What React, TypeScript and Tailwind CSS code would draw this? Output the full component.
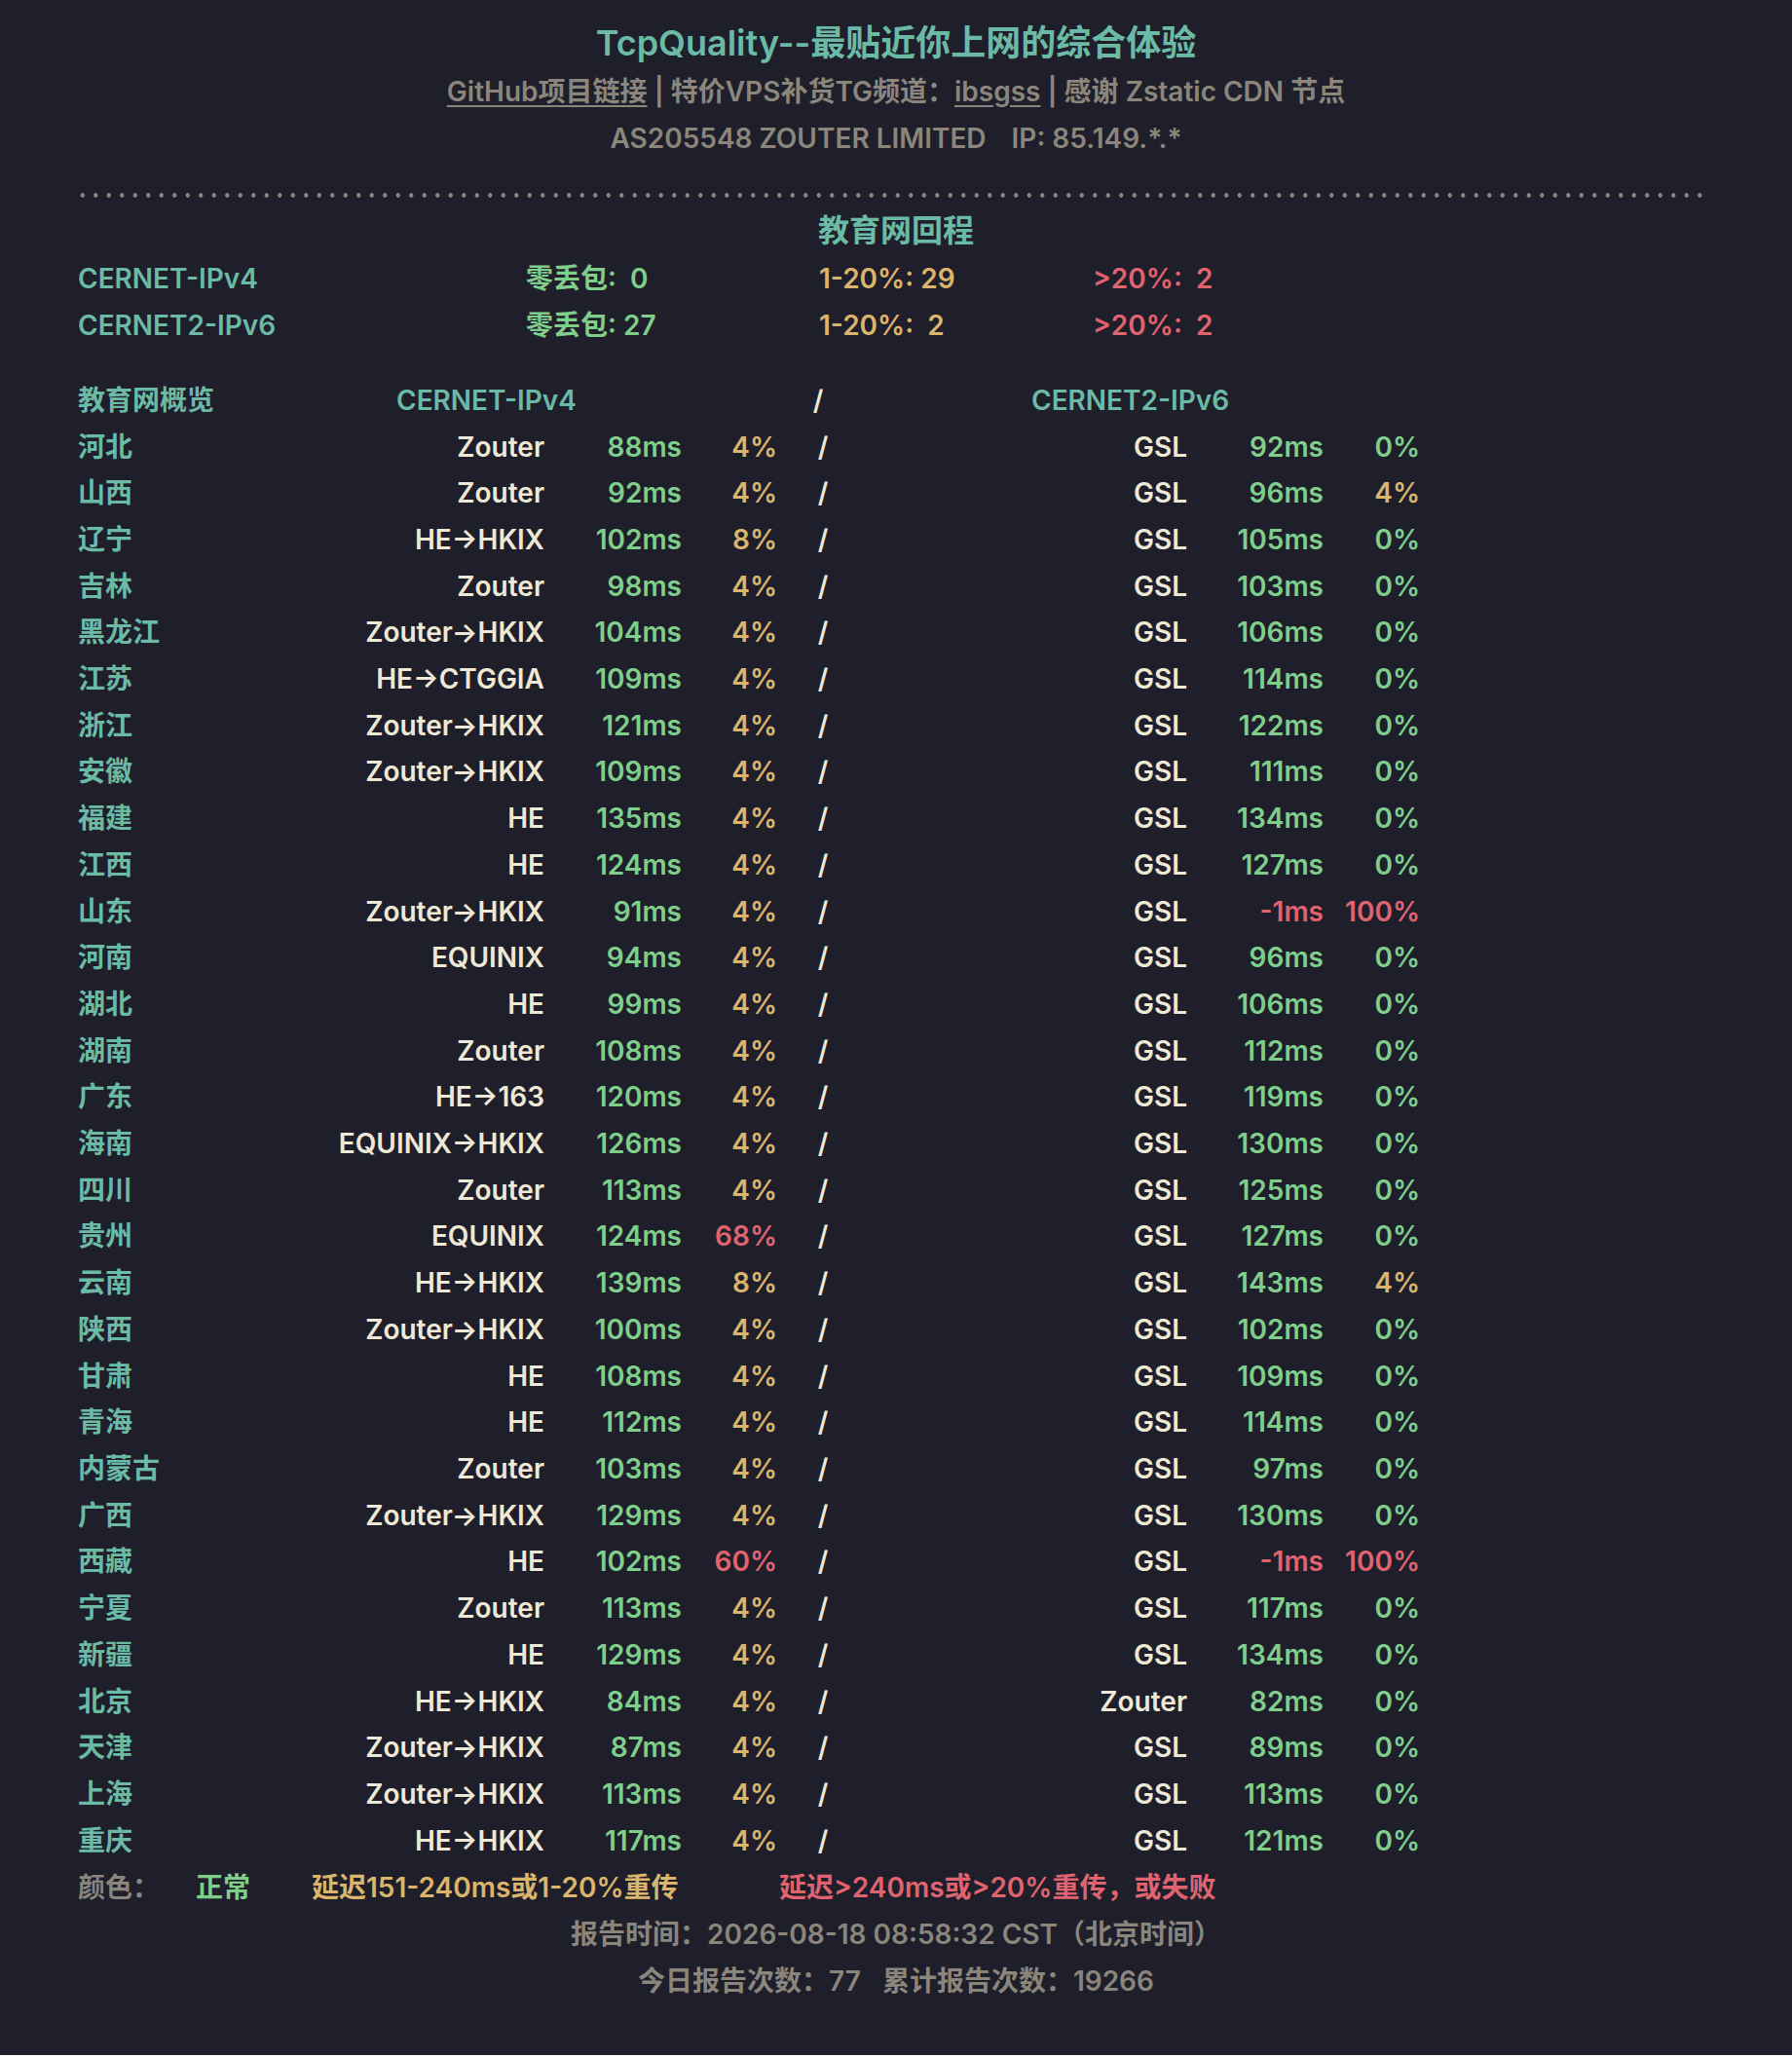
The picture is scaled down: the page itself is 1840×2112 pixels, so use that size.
type Row = {
  prov: string;
  v4: [string, number, number];
  v6: [string, number, number];
};

const rows: Row[] = [
  { prov: "河北", v4: ["Zouter", 88, 4], v6: ["GSL", 92, 0] },
  { prov: "山西", v4: ["Zouter", 92, 4], v6: ["GSL", 96, 4] },
  { prov: "辽宁", v4: ["HE→HKIX", 102, 8], v6: ["GSL", 105, 0] },
  { prov: "吉林", v4: ["Zouter", 98, 4], v6: ["GSL", 103, 0] },
  { prov: "黑龙江", v4: ["Zouter→HKIX", 104, 4], v6: ["GSL", 106, 0] },
  { prov: "江苏", v4: ["HE→CTGGIA", 109, 4], v6: ["GSL", 114, 0] },
  { prov: "浙江", v4: ["Zouter→HKIX", 121, 4], v6: ["GSL", 122, 0] },
  { prov: "安徽", v4: ["Zouter→HKIX", 109, 4], v6: ["GSL", 111, 0] },
  { prov: "福建", v4: ["HE", 135, 4], v6: ["GSL", 134, 0] },
  { prov: "江西", v4: ["HE", 124, 4], v6: ["GSL", 127, 0] },
  { prov: "山东", v4: ["Zouter→HKIX", 91, 4], v6: ["GSL", -1, 100] },
  { prov: "河南", v4: ["EQUINIX", 94, 4], v6: ["GSL", 96, 0] },
  { prov: "湖北", v4: ["HE", 99, 4], v6: ["GSL", 106, 0] },
  { prov: "湖南", v4: ["Zouter", 108, 4], v6: ["GSL", 112, 0] },
  { prov: "广东", v4: ["HE→163", 120, 4], v6: ["GSL", 119, 0] },
  { prov: "海南", v4: ["EQUINIX→HKIX", 126, 4], v6: ["GSL", 130, 0] },
  { prov: "四川", v4: ["Zouter", 113, 4], v6: ["GSL", 125, 0] },
  { prov: "贵州", v4: ["EQUINIX", 124, 68], v6: ["GSL", 127, 0] },
  { prov: "云南", v4: ["HE→HKIX", 139, 8], v6: ["GSL", 143, 4] },
  { prov: "陕西", v4: ["Zouter→HKIX", 100, 4], v6: ["GSL", 102, 0] },
  { prov: "甘肃", v4: ["HE", 108, 4], v6: ["GSL", 109, 0] },
  { prov: "青海", v4: ["HE", 112, 4], v6: ["GSL", 114, 0] },
  { prov: "内蒙古", v4: ["Zouter", 103, 4], v6: ["GSL", 97, 0] },
  { prov: "广西", v4: ["Zouter→HKIX", 129, 4], v6: ["GSL", 130, 0] },
  { prov: "西藏", v4: ["HE", 102, 60], v6: ["GSL", -1, 100] },
  { prov: "宁夏", v4: ["Zouter", 113, 4], v6: ["GSL", 117, 0] },
  { prov: "新疆", v4: ["HE", 129, 4], v6: ["GSL", 134, 0] },
  { prov: "北京", v4: ["HE→HKIX", 84, 4], v6: ["Zouter", 82, 0] },
  { prov: "天津", v4: ["Zouter→HKIX", 87, 4], v6: ["GSL", 89, 0] },
  { prov: "上海", v4: ["Zouter→HKIX", 113, 4], v6: ["GSL", 113, 0] },
  { prov: "重庆", v4: ["HE→HKIX", 117, 4], v6: ["GSL", 121, 0] },
];

const GREEN = "text-[#7fcf8b]";
const YELLOW = "text-[#dbb56c]";
const RED = "text-[#e0646f]";

function msColor(ms: number) {
  if (ms < 0 || ms > 240) return RED;
  if (ms > 150) return YELLOW;
  return GREEN;
}

function pctColor(p: number) {
  if (p > 20) return RED;
  if (p >= 1) return YELLOW;
  return GREEN;
}

const grid =
  "grid grid-cols-[250px_229px_141px_98px_88px_333px_140px_99px] leading-[47.7px]";

export default function App() {
  return (
    <main className="min-h-[2110px] bg-[#1f1e2b] pt-[18px] font-['Inter','Noto_Sans_CJK_SC',sans-serif] text-[28px] font-semibold leading-[47.7px] text-[#8b867b]">
      <h1 className="text-center text-[36px] leading-[52px] text-[#6bbaa5]">
        TcpQuality--最贴近你上网的综合体验
      </h1>
      <p className="mt-[1px] text-center">
        <a className="underline underline-offset-4">GitHub项目链接</a> |{" "}
        特价VPS补货TG频道：<a className="underline underline-offset-4">ibsgss</a> | 感谢 Zstatic CDN 节点
      </p>
      <p className="text-center">
        AS205548 ZOUTER LIMITED<span className="ml-[26px]">IP: 85.149.*.*</span>
      </p>

      <div className="ml-[78px] mt-[32px] h-[5px] w-[1677px] bg-[radial-gradient(circle,#8b867b_2.1px,transparent_2.5px)] bg-[length:13.5px_5px]" />

      <h2 className="mt-[10px] text-center text-[32px] leading-[48px] text-[#6bbaa5]">教育网回程</h2>
      <div className="ml-[80px] mt-[2px] grid grid-cols-[460px_301px_281px_auto]">
        <div className="text-[#6bbaa5]">CERNET-IPv4</div>
        <div className={GREEN}>零丢包:&nbsp; 0</div>
        <div className={YELLOW}>1-20%: 29</div>
        <div className={RED}>&gt;20%:&nbsp; 2</div>
        <div className="text-[#6bbaa5]">CERNET2-IPv6</div>
        <div className={GREEN}>零丢包: 27</div>
        <div className={YELLOW}>1-20%:&nbsp; 2</div>
        <div className={RED}>&gt;20%:&nbsp; 2</div>
      </div>

      <div className="ml-[80px] mt-[29px]">
        <div className={grid}>
          <div className="text-[#6bbaa5]">教育网概览</div>
          <div className="col-span-3 pl-[77px] text-[#6bbaa5]">CERNET-IPv4</div>
          <div className="pr-[4px] text-center text-[#eee8d5]">/</div>
          <div className="col-span-3 pl-[173px] text-[#6bbaa5]">CERNET2-IPv6</div>
        </div>
        {rows.map((r) => (
          <div key={r.prov} className={grid}>
            <div className="text-[#6bbaa5]">{r.prov}</div>
            <div className="whitespace-nowrap text-right text-[#eee8d5]">{r.v4[0]}</div>
            <div className={`text-right ${msColor(r.v4[1])}`}>{r.v4[1]}ms</div>
            <div className={`text-right ${pctColor(r.v4[2])}`}>{r.v4[2]}%</div>
            <div className="pl-[6px] text-center text-[#eee8d5]">/</div>
            <div className="text-right text-[#eee8d5]">{r.v6[0]}</div>
            <div className={`text-right ${msColor(r.v6[1])}`}>{r.v6[1]}ms</div>
            <div className={`text-right ${pctColor(r.v6[2])}`}>{r.v6[2]}%</div>
          </div>
        ))}
      </div>

      <div className="ml-[80px] mt-[1px] grid grid-cols-[121px_119px_480px_auto]">
        <div>颜色：</div>
        <div className={GREEN}>正常</div>
        <div className={YELLOW}>延迟151-240ms或1-20%重传</div>
        <div className={RED}>延迟&gt;240ms或&gt;20%重传，或失败</div>
      </div>
      <p className="text-center">报告时间：2026-08-18 08:58:32 CST（北京时间）</p>
      <p className="text-center">
        今日报告次数：77<span className="ml-[22px]">累计报告次数：19266</span>
      </p>
    </main>
  );
}
